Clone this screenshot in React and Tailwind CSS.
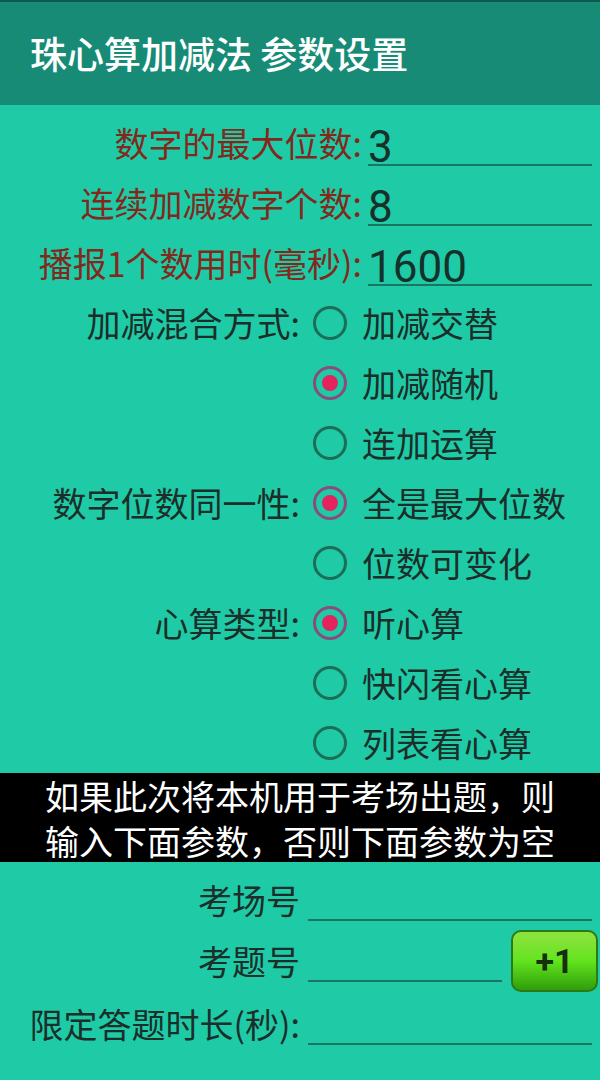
import React from "react";

const CJK = { fontFamily: '"Noto Sans CJK SC", "Noto Sans", sans-serif' };
const NUM = { fontFamily: 'Roboto, "Noto Sans CJK SC", sans-serif' };

function Radio({ on }) {
  if (on) {
    return (
      <div className="w-[34px] h-[34px] rounded-full border-[3px] border-[#8a4c7c] flex items-center justify-center shrink-0">
        <div className="w-[16px] h-[16px] rounded-full bg-[#e3245f]" />
      </div>
    );
  }
  return <div className="w-[34px] h-[34px] rounded-full border-[3px] border-[#1b6e58] shrink-0" />;
}

function InputRow({ label, value }) {
  return (
    <div className="flex h-[60px] items-center">
      <div className="w-[362px] text-right text-[34px] leading-none text-[#82291d] whitespace-nowrap" style={CJK}>
        {label}
      </div>
      <div className="flex-1 ml-[6px] mr-[8px] h-[46px] border-b-2 border-[#1a7662] flex items-end">
        <span className="text-[44px] leading-none text-[#16302a] -mb-[5px]" style={NUM}>{value}</span>
      </div>
    </div>
  );
}

function RadioRow({ label, text, on }) {
  return (
    <div className="flex h-[60px] items-center">
      <div className="w-[300px] text-right text-[34px] leading-none text-[#1c2e29] whitespace-nowrap" style={CJK}>
        {label}
      </div>
      <div className="ml-[13px]">
        <Radio on={on} />
      </div>
      <div className="ml-[15px] text-[34px] leading-none text-[#1c2e29] whitespace-nowrap" style={CJK}>
        {text}
      </div>
    </div>
  );
}

function BottomRow({ label, children, h = "h-[60px]" }) {
  return (
    <div className={`flex ${h} items-center`}>
      <div className="w-[300px] text-right text-[34px] leading-none text-[#1c2e29] whitespace-nowrap" style={CJK}>
        {label}
      </div>
      {children}
    </div>
  );
}

export default function App() {
  return (
    <div className="w-[600px] h-[1080px] bg-[#1fcaa6] overflow-hidden">
      <div className="h-[105px] bg-[#178b76] border-t-2 border-[#0f5a4c] flex items-center pl-[30px]">
        <span className="text-[37px] leading-none text-white font-medium" style={CJK}>珠心算加减法 参数设置</span>
      </div>
      <div className="pt-[8px]">
        <InputRow label="数字的最大位数:" value="3" />
        <InputRow label="连续加减数字个数:" value="8" />
        <InputRow label="播报1个数用时(毫秒):" value="1600" />
        <RadioRow label="加减混合方式:" text="加减交替" />
        <RadioRow label="" text="加减随机" on />
        <RadioRow label="" text="连加运算" />
        <RadioRow label="数字位数同一性:" text="全是最大位数" on />
        <RadioRow label="" text="位数可变化" />
        <RadioRow label="心算类型:" text="听心算" on />
        <RadioRow label="" text="快闪看心算" />
        <RadioRow label="" text="列表看心算" />
      </div>
      <div className="h-[89px] bg-black flex flex-col items-center justify-center text-white text-[34px] leading-[45px]" style={CJK}>
        <div>如果此次将本机用于考场出题，则</div>
        <div>输入下面参数，否则下面参数为空</div>
      </div>
      <div className="pt-[8px]">
        <BottomRow label="考场号">
          <div className="flex-1 ml-[8px] mr-[8px] h-[42px] border-b-2 border-[#1a7662]" />
        </BottomRow>
        <BottomRow label="考题号" h="h-[62px]">
          <div className="flex-1 ml-[8px] h-[42px] border-b-2 border-[#1a7662]" />
          <div className="ml-[9px] mr-[2px] w-[87px] h-[62px] rounded-[10px] border-2 border-[#2c7a14] bg-gradient-to-b from-[#8ee23e] via-[#62e41e] to-[#2f9e0c] flex items-center justify-center">
            <span className="text-[34px] font-bold leading-none text-[#14300e]" style={NUM}>+1</span>
          </div>
        </BottomRow>
        <BottomRow label="限定答题时长(秒):" h="h-[64px]">
          <div className="flex-1 ml-[8px] mr-[8px] h-[42px] border-b-2 border-[#1a7662]" />
        </BottomRow>
      </div>
    </div>
  );
}
